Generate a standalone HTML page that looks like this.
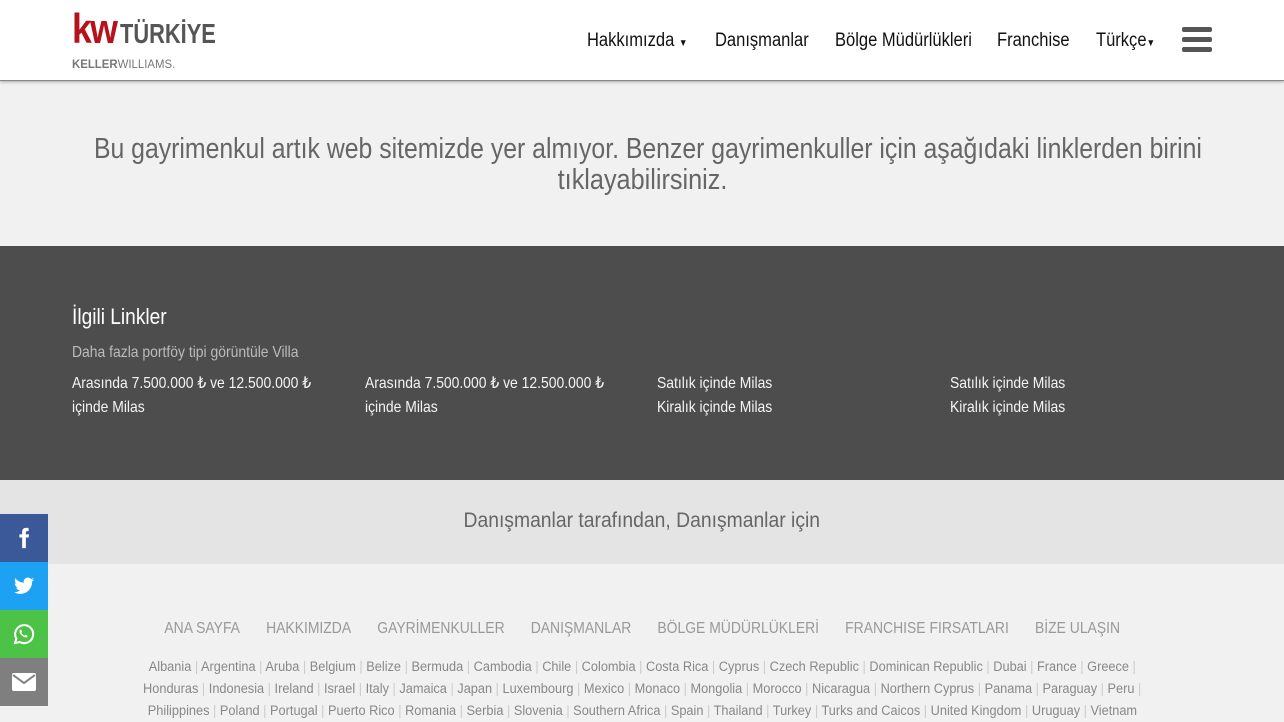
<!DOCTYPE html>
<html><head><meta charset="utf-8"><style>
*{margin:0;padding:0;box-sizing:border-box}
body{width:1284px;height:715px;overflow:hidden;background:#f1f1f1;font-family:"Liberation Sans",sans-serif;color:#666}
.n{display:inline-block;transform:scaleX(.87);transform-origin:left top;white-space:nowrap}
.nc{display:inline-block;transform:scaleX(.87);transform-origin:center top;white-space:nowrap}
.hdr{height:81px;background:#fff;border-bottom:1px solid #888;position:relative;box-shadow:0 1px 3px rgba(0,0,0,.3)}
.logo{position:absolute;left:72px;top:10px}
.nav{position:absolute;top:30px;font-size:19px;color:#111;white-space:nowrap;transform:scaleX(.87);transform-origin:left top}
.ham{position:absolute;left:1182px;top:27px;width:30px}
.ham i{display:block;height:5px;background:#555;border-radius:2px;margin-bottom:5px}
.msg{height:165px;text-align:center;font-size:29px;color:#666;padding-top:53px;line-height:31px}
.dark{height:234px;background:#4d4d4d;position:relative;color:#fff}
.dark h3{position:absolute;left:72px;top:58px;font-weight:normal;font-size:22px}
.dark .sub{position:absolute;left:72px;top:98px;font-size:16px;color:#bbb}
.col{position:absolute;top:126px;font-size:16px;line-height:24px;color:#f4f4f4}
.band{height:84px;background:#e4e4e4;text-align:center;font-size:21px;color:#666;padding-top:29px}
.links{text-align:center;font-size:16px;color:#999;padding-top:56px;white-space:nowrap}
.links span{margin:0 15px}
.c{text-align:center;font-size:13.5px;color:#888;line-height:22px;white-space:nowrap}
.c i{font-style:normal;color:#ccc}
.soc{position:absolute;left:0;width:48px;height:48px;display:flex;align-items:center;justify-content:center}
</style></head><body>
<div class="hdr">
 <div class="logo">
  <div style="line-height:38px;font-weight:bold;white-space:nowrap"><span style="color:#b5121b;font-size:42px;letter-spacing:-2px;display:inline-block;transform:scaleX(.85);transform-origin:left">kw</span><span style="color:#555;font-size:28px;display:inline-block;transform:scaleX(.78);transform-origin:left;margin-left:-4px">TÜRKİYE</span></div>
  <div style="font-size:12px;color:#777;margin-top:-1px;transform:scaleX(.95);transform-origin:left"><b>KELLER</b>WILLIAMS.</div>
 </div>
 <div class="nav" style="left:587px">Hakkımızda <span style="font-size:10px">▼</span></div>
 <div class="nav" style="left:715px">Danışmanlar</div>
 <div class="nav" style="left:835px">Bölge Müdürlükleri</div>
 <div class="nav" style="left:997px">Franchise</div>
 <div class="nav" style="left:1096px">Türkçe<span style="font-size:10px">▼</span></div>
 <div class="ham"><i></i><i></i><i></i></div>
</div>
<div class="msg"><span class="nc" style="transform:scaleX(.855)">Bu gayrimenkul artık web sitemizde yer almıyor. Benzer gayrimenkuller için aşağıdaki linklerden birini</span><br><span class="nc">tıklayabilirsiniz.</span></div>
<div class="dark">
 <h3><span class="n">İlgili Linkler</span></h3>
 <div class="sub"><span class="n">Daha fazla portföy tipi görüntüle Villa</span></div>
 <div class="col" style="left:72px"><span class="n">Arasında 7.500.000 ₺ ve 12.500.000 ₺<br>içinde Milas</span></div>
 <div class="col" style="left:365px"><span class="n">Arasında 7.500.000 ₺ ve 12.500.000 ₺<br>içinde Milas</span></div>
 <div class="col" style="left:657px"><span class="n">Satılık içinde Milas<br>Kiralık içinde Milas</span></div>
 <div class="col" style="left:950px"><span class="n">Satılık içinde Milas<br>Kiralık içinde Milas</span></div>
</div>
<div class="band"><span class="nc" style="transform:scaleX(.92)">Danışmanlar tarafından, Danışmanlar için</span></div>
<div class="links"><span class="nc" style="margin:0"><span>ANA SAYFA</span><span>HAKKIMIZDA</span><span>GAYRİMENKULLER</span><span>DANIŞMANLAR</span><span>BÖLGE MÜDÜRLÜKLERİ</span><span>FRANCHISE FIRSATLARI</span><span>BİZE ULAŞIN</span></span></div>
<div class="c" style="margin-top:18px"><span class="nc" style="transform:scaleX(.945)">Albania <i>|</i> Argentina <i>|</i> Aruba <i>|</i> Belgium <i>|</i> Belize <i>|</i> Bermuda <i>|</i> Cambodia <i>|</i> Chile <i>|</i> Colombia <i>|</i> Costa Rica <i>|</i> Cyprus <i>|</i> Czech Republic <i>|</i> Dominican Republic <i>|</i> Dubai <i>|</i> France <i>|</i> Greece <i>|</i></span></div>
<div class="c"><span class="nc" style="transform:scaleX(.945)">Honduras <i>|</i> Indonesia <i>|</i> Ireland <i>|</i> Israel <i>|</i> Italy <i>|</i> Jamaica <i>|</i> Japan <i>|</i> Luxembourg <i>|</i> Mexico <i>|</i> Monaco <i>|</i> Mongolia <i>|</i> Morocco <i>|</i> Nicaragua <i>|</i> Northern Cyprus <i>|</i> Panama <i>|</i> Paraguay <i>|</i> Peru <i>|</i></span></div>
<div class="c"><span class="nc" style="transform:scaleX(.945)">Philippines <i>|</i> Poland <i>|</i> Portugal <i>|</i> Puerto Rico <i>|</i> Romania <i>|</i> Serbia <i>|</i> Slovenia <i>|</i> Southern Africa <i>|</i> Spain <i>|</i> Thailand <i>|</i> Turkey <i>|</i> Turks and Caicos <i>|</i> United Kingdom <i>|</i> Uruguay <i>|</i> Vietnam</span></div>
<div class="soc" style="top:514px;background:#3b5998"><svg width="22" height="24" viewBox="0 0 24 24"><path fill="#fff" d="M14 8V6c0-1 .5-1.5 1.5-1.5H17V1h-3c-3 0-4 2-4 4.5V8H7v3.5h3V23h4V11.5h3l.5-3.5z"/></svg></div>
<div class="soc" style="top:562px;background:#1da1f2"><svg width="24" height="22" viewBox="0 0 24 24"><path fill="#fff" d="M23 5c-.8.4-1.7.6-2.6.7.9-.6 1.6-1.4 2-2.5-.9.5-1.9.9-2.9 1.1A4.5 4.5 0 0 0 11.8 8.4 12.8 12.8 0 0 1 2.5 3.6a4.5 4.5 0 0 0 1.4 6 4.5 4.5 0 0 1-2-.6c0 2.2 1.5 4 3.6 4.5-.7.2-1.4.2-2 .1.6 1.8 2.2 3.1 4.2 3.1A9 9 0 0 1 1 18.6 12.8 12.8 0 0 0 8 20.6c8.3 0 12.8-6.9 12.8-12.8v-.6c.9-.6 1.6-1.4 2.200-2.2z"/></svg></div>
<div class="soc" style="top:610px;background:#4cc246"><svg width="24" height="24" viewBox="0 0 24 24"><path fill="none" stroke="#fff" stroke-width="2" d="M3 21l1.3-4.5A9 9 0 1 1 7.8 20z"/><path fill="#fff" d="M9 7.5c.5 0 .7 1.5 1 2s-.8 1 -.5 1.5c.6 1 1.5 2 2.8 2.6.5.2 1-.9 1.4-.8s1.8.8 1.9 1.1c0 .7-.6 1.600-1.6 1.6-2.5 0-6.5-3.5-6.5-6 0-1.5.9-2 1.5-2z"/></svg></div>
<div class="soc" style="top:658px;background:#7f7f7f"><svg width="24" height="18" viewBox="0 0 24 18"><rect x="0" y="0" width="24" height="18" rx="2" fill="#fff"/><path d="M1 2l11 8 11-8" fill="none" stroke="#7f7f7f" stroke-width="2"/></svg></div>
</body></html>
